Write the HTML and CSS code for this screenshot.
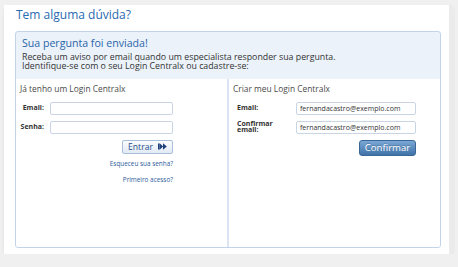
FILE: index.html
```html
<!DOCTYPE html>
<html lang="pt-br">
<head>
    <meta charset="UTF-8">
    <meta name="viewport" content="width=device-width, initial-scale=1.0">
    <title>Tem alguma dúvida?</title>
    <link rel="stylesheet" href="styles.css">
</head>
<body>
    <div class="panel">
        <h1 class="title">Tem alguma dúvida?</h1>
        <div class="box">
            <div class="box-head">
                <h2>Sua pergunta foi enviada!</h2>
                <p>Receba um aviso por email quando um especialista responder sua pergunta.<br>
                Identifique-se com o seu Login Centralx ou cadastre-se:</p>
            </div>
            <div class="box-body">
                <div class="col col-login">
                    <h3>Já tenho um Login Centralx</h3>
                    <form class="form form-login">
                        <label for="email">Email:</label>
                        <input type="text" id="email" name="email">
                        <label for="senha">Senha:</label>
                        <input type="password" id="senha" name="senha">
                        <button type="button" class="btn btn-light">
                            Entrar
                            <svg class="ico" width="9" height="7" viewBox="0 0 9 7">
                                <rect x="0" y="0.5" width="1.6" height="6" fill="#1d3f7c"/>
                                <path d="M1.6 0.3 L5.2 3.5 L1.6 6.7 Z" fill="#1d3f7c"/>
                                <path d="M5 0.3 L8.8 3.5 L5 6.7 Z" fill="#1d3f7c"/>
                            </svg>
                        </button>
                    </form>
                    <div class="links">
                        <a href="#">Esqueceu sua senha?</a>
                        <a href="#">Primeiro acesso?</a>
                    </div>
                </div>
                <div class="col col-new">
                    <h3>Criar meu Login Centralx</h3>
                    <form class="form form-new">
                        <label for="novo-email">Email:</label>
                        <input type="text" id="novo-email" value="fernandacastro@exemplo.com">
                        <label for="conf-email">Confirmar email:</label>
                        <input type="text" id="conf-email" value="fernandacastro@exemplo.com">
                        <button type="button" class="btn btn-blue">Confirmar</button>
                    </form>
                </div>
            </div>
        </div>
    </div>
</body>
</html>
```

FILE: styles.css
```css
/* Geral */
body {
    margin: 0;
    background: #f0f0f0;
    font-family: "Open Sans", "Liberation Sans", sans-serif;
    color: #333;
}

.panel {
    margin: 5px 5px 0 4px;
    height: 249px;
    background: #fff;
    border-right: 4px solid #ebebeb;
    box-shadow: 0 3px 3px rgba(0, 0, 0, 0.07);
    overflow: hidden;
}

.title {
    margin: 0;
    padding: 3px 0 0 12px;
    font-size: 12px;
    line-height: 14px;
    font-weight: normal;
    color: #2b6ab0;
}

/* Caixa azul */
.box {
    margin: 9px 8px 0 11px;
    height: 217px;
    box-sizing: border-box;
    border: 1px solid #c2d3ea;
    border-radius: 3px;
    background: #ebf2fa;
    display: flex;
    flex-direction: column;
    overflow: hidden;
}

.box-head {
    height: 47px;
    box-sizing: border-box;
    padding: 5px 6px 0;
}

.box-head h2 {
    margin: 0;
    font-size: 10.6px;
    line-height: 12px;
    font-weight: normal;
    color: #2a65a8;
}

.box-head p {
    margin: 4px 0 0;
    font-size: 8.8px;
    line-height: 9px;
    color: #333;
}

.box-body {
    flex: 1;
    display: flex;
    background: #fff;
}

.col {
    box-sizing: border-box;
    padding: 4.7px 0 0 4px;
}

.col-login {
    width: 211px;
}

.col-new {
    flex: 1;
    border-left: 2px solid #dce5f1;
}

.col h3 {
    margin: 0;
    font-size: 8.4px;
    line-height: 10px;
    font-weight: normal;
    color: #4a4a4a;
}

/* Formularios */
.form {
    display: grid;
    column-gap: 6px;
    row-gap: 6px;
    align-items: center;
    margin-top: 8.3px;
}

.form-login {
    grid-template-columns: 24px 123px;
}

.form-login label {
    text-align: right;
}

.form-new {
    padding-left: 4px;
    grid-template-columns: 53px 120px;
}

.form label {
    font-size: 7px;
    line-height: 6.5px;
    font-weight: bold;
    color: #333;
}

.form input {
    height: 13px;
    box-sizing: border-box;
    margin: 0;
    padding: 0 3px;
    border: 1px solid #c9d5e5;
    border-radius: 2px;
    font-family: "Open Sans", "Liberation Sans", sans-serif;
    font-size: 7px;
    color: #333;
    outline: none;
}

.btn {
    grid-column: 2;
    justify-self: end;
    margin: 0;
    padding: 0;
    font-family: "Open Sans", "Liberation Sans", sans-serif;
    cursor: pointer;
    display: flex;
    align-items: center;
    justify-content: center;
}

.btn-light {
    width: 51px;
    height: 14px;
    gap: 5px;
    border: 1px solid #a9bfd9;
    border-radius: 2px;
    background: linear-gradient(#fbfcfe, #e2eaf4);
    font-size: 8.6px;
    color: #1f4f8a;
}

.btn-blue {
    width: 57px;
    height: 16px;
    border: 1px solid #3a6796;
    border-radius: 3px;
    background: linear-gradient(#7aa8d6, #3f72a8);
    font-size: 9.6px;
    color: #fff;
    text-shadow: 0 -1px 0 rgba(0, 0, 0, 0.2);
}

.links {
    width: 153px;
    margin-top: 6px;
    text-align: right;
}

.links a {
    display: block;
    font-size: 6.4px;
    line-height: 8px;
    color: #2b5c9a;
    text-decoration: none;
}

.links a + a {
    margin-top: 8px;
}
```
